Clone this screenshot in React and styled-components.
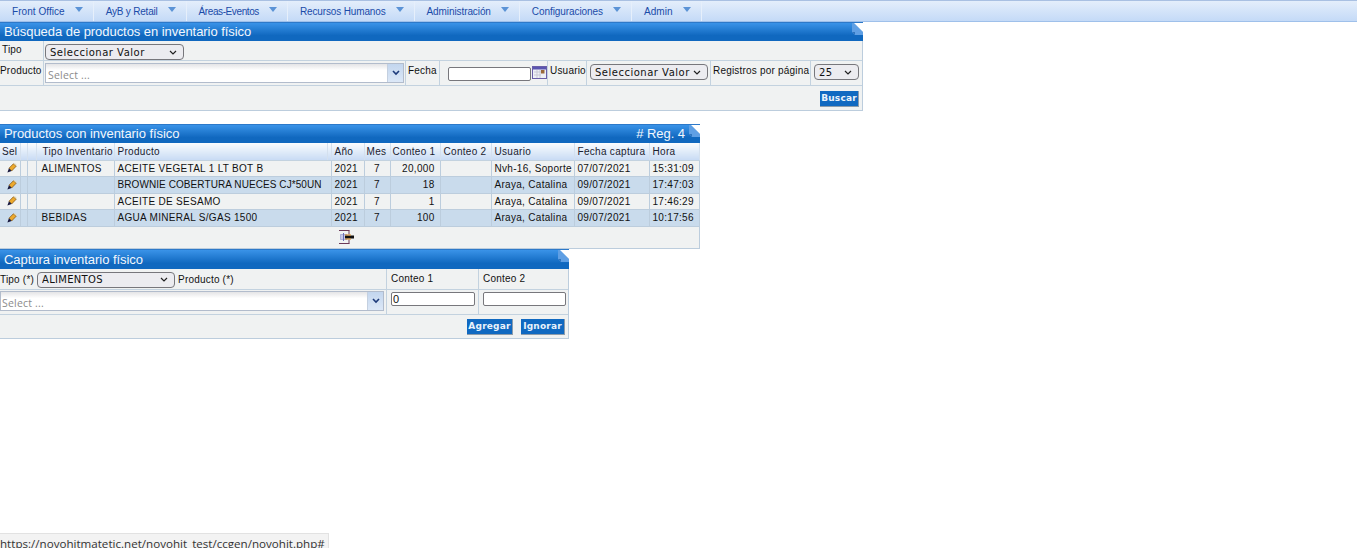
import React from 'react'
import styled, { createGlobalStyle } from 'styled-components'

const selectArrow = "data:image/svg+xml,%3Csvg xmlns='http://www.w3.org/2000/svg' width='8' height='5'%3E%3Cpath d='M1 1l3 3 3-3' fill='none' stroke='%23222' stroke-width='1.2'/%3E%3C/svg%3E";

const GlobalStyle = createGlobalStyle`
    html, body {
        margin: 0;
        padding: 0;
        background: #fff;
        font-family: 'Liberation Sans', Arial, sans-serif;
        font-size: 10px;
        color: #111;
    }
`;

const MenuBar = styled.div`
    display: flex;
    height: 22px;
    box-sizing: border-box;
    border-top: 1px solid #a9c0e2;
    border-bottom: 1px solid #9fc0ea;
    background: linear-gradient(#e4eefb, #c4daf7);
`;

const MenuItem = styled.div`
    display: flex;
    align-items: center;
    height: 20px;
    padding: 0 10px 0 12px;
    gap: 10px;
    border-right: 1px solid #e6effb;
    color: #1a4ba8;
    font-size: 10px;
    letter-spacing: ${props => props.$spacing}px;
    box-sizing: border-box;
`;

const MenuArrow = styled.span`
    width: 0;
    height: 0;
    margin-top: -4px;
    border-left: 4px solid transparent;
    border-right: 4px solid transparent;
    border-top: 5px solid #5b93d6;
`;

const Panel = styled.section`
    width: ${props => props.$width}px;
    margin-top: ${props => props.$top || 0}px;
    box-sizing: border-box;
    background: #f0f2f2;
    border-right: 1px solid #bccddd;
    border-bottom: 1px solid #bccddd;
`;

const PanelTitle = styled.div`
    position: relative;
    display: flex;
    justify-content: space-between;
    align-items: center;
    box-sizing: border-box;
    height: ${props => props.$height || 19}px;
    margin-right: -1px;
    padding: ${props => props.$height ? '1px 15px 0 4px' : '0 15px 1px 4px'};
    border-top: 1px solid #2d79c9;
    background: linear-gradient(#3a93e8, #1068bf 70%);
    color: #f2f7fd;
    font-size: 13px;
    letter-spacing: -0.05px;
`;

const Fold = styled.svg`
    position: absolute;
    top: 0;
    right: 0;
`;

const Row = styled.div`
    display: flex;
    height: ${props => props.$height}px;
    box-sizing: border-box;
    border-bottom: ${props => props.$last ? 'none' : '1px solid #c3d2df'};
`;

const Cell = styled.div`
    display: flex;
    align-items: ${props => props.$align || 'center'};
    justify-content: ${props => props.$justify || 'flex-start'};
    flex: ${props => props.$width ? `0 0 ${props.$width}px` : '1'};
    gap: ${props => props.$gap || 0}px;
    box-sizing: border-box;
    padding: ${props => props.$padding || '0'};
    border-right: ${props => props.$last ? 'none' : '1px solid #c3d2df'};
`;

const Label = styled.span`
    font-size: 10px;
    letter-spacing: 0.2px;
    white-space: nowrap;
`;

const Select = styled.select`
    appearance: none;
    width: ${props => props.$width}px;
    height: 16px;
    box-sizing: border-box;
    padding: 0 0 0 4px;
    font-family: 'DejaVu Sans', Verdana, sans-serif;
    font-size: 10px;
    letter-spacing: ${props => props.$spacing ?? 0.5}px;
    color: #111;
    background: #ececf0 url("${selectArrow}") no-repeat right 6px center;
    border: 1px solid #77777c;
    border-radius: 4px;
`;

const Combo = styled.div`
    display: flex;
    width: ${props => props.$width}px;
    height: ${props => props.$height}px;
    box-sizing: border-box;
    border: 1px solid #b2bccc;
    background: linear-gradient(#e4e4e6, #fff 35%);
`;

const ComboText = styled.span`
    flex: 1;
    align-self: center;
    padding-left: ${props => props.$pad || 2}px;
    margin-top: 3px;
    color: #8b8b8b;
    font-family: 'Open Sans', sans-serif;
    font-size: 10.5px;
    letter-spacing: 0.2px;
`;

const ComboButton = styled.span`
    display: flex;
    align-items: center;
    justify-content: center;
    width: 15px;
    background: linear-gradient(#c3d6ee, #dce8f7);
    border-left: 1px solid #c4d0e0;
`;

const TextInput = styled.input`
    width: ${props => props.$width}px;
    height: 14px;
    box-sizing: border-box;
    padding: 0 1px;
    font-family: 'Liberation Sans', Arial, sans-serif;
    font-size: 11px;
    color: #111;
    background: #fff;
    border: 1px solid #77777c;
    border-radius: 2px;
    outline: none;
`;

const Button = styled.button`
    height: 16px;
    padding: 0;
    width: ${props => props.$width}px;
    font-family: 'DejaVu Sans', Verdana, sans-serif;
    font-size: 9px;
    font-weight: bold;
    letter-spacing: 0.2px;
    color: #e9f2fb;
    background: #1069c1;
    border: none;
    border-right: 1px solid #8c9cab;
    border-bottom: 1px solid #8c9cab;
`;

const Table = styled.table`
    width: 699px;
    table-layout: fixed;
    border-collapse: collapse;
    font-size: 10px;
    letter-spacing: 0.3px;
`;

const Th = styled.th`
    height: 17px;
    padding: 0 0 0 ${props => props.$pad ?? 3}px;
    box-sizing: border-box;
    font-weight: normal;
    text-align: left;
    white-space: nowrap;
    overflow: hidden;
    color: #1a2230;
    background: linear-gradient(#fafcfe, #c8dbf4);
    border-right: 1px solid #d4e0ee;
    border-bottom: 1px solid #c3d2df;
`;

const Td = styled.td`
    height: 16.5px;
    padding: ${props => props.$right ? '0 5px 0 0' : '0 0 0 3px'};
    box-sizing: border-box;
    text-align: ${props => props.$right ? 'right' : 'left'};
    white-space: nowrap;
    overflow: hidden;
    background: ${props => props.$zebra ? '#c9dbec' : '#f0f2f2'};
    border-right: 1px solid #bccddd;
    border-bottom: 1px solid #bccddd;
`;

const PencilCell = styled(Td)`
    padding: 0 0 0 7px;
`;

const NumberCell = styled(Td)`
    padding: 0;
    text-align: center;
`;

const TipoCell = styled(Td)`
    padding-left: 5px;
`;

const ProductCell = styled(Td)`
    letter-spacing: ${props => props.$spacing ?? 0.3}px;
`;

const TableFoot = styled.div`
    display: flex;
    justify-content: center;
    align-items: center;
    height: 21px;
    padding-right: 6px;
`;

const StatusBar = styled.div`
    position: fixed;
    left: 0;
    bottom: 0;
    width: 329px;
    height: 15px;
    box-sizing: border-box;
    overflow: hidden;
    background: #f3f3f3;
    border-top: 1px solid #e2e2e2;
    border-right: 1px solid #e2e2e2;
    color: #333;
    font-family: 'Open Sans', sans-serif;
    font-size: 11.6px;
    line-height: 19px;
    white-space: nowrap;
`;

const menus = [
    { name: 'Front Office', spacing: 0.05 },
    { name: 'AyB y Retail', spacing: -0.2 },
    { name: 'Áreas-Eventos', spacing: -0.4 },
    { name: 'Recursos Humanos', spacing: -0.14 },
    { name: 'Administración', spacing: -0.09 },
    { name: 'Configuraciones', spacing: -0.08 },
    { name: 'Admin', spacing: 0.05 },
];

const colWidths = [20, 7, 9, 78, 213, 4, 33, 26, 50, 51, 83, 75, 50];

const products = [
    { tipo: 'ALIMENTOS', producto: 'ACEITE VEGETAL 1 LT BOT B', conteo: '20,000', usuario: 'Nvh-16, Soporte', fecha: '07/07/2021', hora: '15:31:09' },
    { tipo: '', producto: 'BROWNIE COBERTURA NUECES CJ*50UN', spacing: 0.08, conteo: '18', usuario: 'Araya, Catalina', fecha: '09/07/2021', hora: '17:47:03' },
    { tipo: '', producto: 'ACEITE DE SESAMO', conteo: '1', usuario: 'Araya, Catalina', fecha: '09/07/2021', hora: '17:46:29' },
    { tipo: 'BEBIDAS', producto: 'AGUA MINERAL S/GAS 1500', conteo: '100', usuario: 'Araya, Catalina', fecha: '09/07/2021', hora: '10:17:56' },
];

const FoldIcon = () => (
    <Fold width="11" height="12" viewBox="0 0 11 12">
        <path d="M0 0H2L11 9V12H3L0 9Z" fill="#5f9fe4" />
        <path d="M0 9H3V12Z" fill="#2f74bd" />
        <path d="M2 0H11V9Z" fill="#fff" />
    </Fold>
);

const Chevron = () => (
    <svg width="8" height="6" viewBox="0 0 8 6">
        <path d="M1 1L4 4L7 1" fill="none" stroke="#1d3a7a" strokeWidth="1.6" />
    </svg>
);

const PencilIcon = () => (
    <svg width="10" height="10" viewBox="0 0 10 10" style={{ display: 'block' }}>
        <path d="M2 5.2L6.4 0.8L9.2 3.2L4.6 8Z" fill="#eda92c" stroke="#7a4e10" strokeWidth="0.7" />
        <path d="M6.8 0.7L8 0.2L9.8 1.9L9.2 3Z" fill="#e6d7ae" />
        <path d="M2 5.2L4.6 8L0.4 9.6Z" fill="#16163c" />
    </svg>
);

const CalendarIcon = () => (
    <svg width="15" height="13" viewBox="0 0 15 13" style={{ marginTop: -4 }}>
        <rect x="0.5" y="0.5" width="14" height="12" fill="#eef0f6" stroke="#6a5fa8" />
        <rect x="1" y="1" width="13" height="2.5" fill="#5a55b0" />
        <path d="M2 6H9M2 9H9M5 4V12M8 4V12" stroke="#c9c9d4" />
        <rect x="9" y="4" width="3.5" height="3.5" fill="#9a6a3a" />
    </svg>
);

const ExportIcon = () => (
    <svg width="15" height="16" viewBox="0 0 15 16">
        <path d="M0 1.5H10.5M0 14.5H10.5M10 1.5V5.5M10 10.5V14.5" fill="none" stroke="#6c3a58" />
        <path d="M1.5 5.5H8V10.5H1.5Z" fill="#c7c9e8" stroke="#8e92c8" strokeWidth="0.6" />
        <path d="M4.5 4V12" stroke="#6a6fb8" />
        <rect x="6" y="6.5" width="9" height="3" fill="#111" />
        <rect x="6" y="5.5" width="6" height="1" fill="#d98a1c" />
        <rect x="6" y="9.5" width="6" height="1" fill="#d98a1c" />
    </svg>
);

const Search = () => (
    <Panel $width={863}>
        <PanelTitle>Búsqueda de productos en inventario físico<FoldIcon /></PanelTitle>
        <Row $height={20}>
            <Cell $width={44} $align="flex-start" $padding="3px 0 0 2px"><Label>Tipo</Label></Cell>
            <Cell $last $padding="3px 0 0 1px">
                <Select $width={139}><option>Seleccionar Valor</option></Select>
            </Cell>
        </Row>
        <Row $height={25}>
            <Cell $width={44} $align="flex-start" $padding="4px 0 0 0"><Label>Producto</Label></Cell>
            <Cell $width={362} $padding="0 0 0 1px">
                <Combo $width={359} $height={20}>
                    <ComboText>Select ...</ComboText>
                    <ComboButton><Chevron /></ComboButton>
                </Combo>
            </Cell>
            <Cell $width={34} $align="flex-start" $padding="4px 0 0 2px"><Label>Fecha</Label></Cell>
            <Cell $width={108} $padding="2px 0 0 8px" $gap={1}>
                <TextInput $width={83} readOnly />
                <CalendarIcon />
            </Cell>
            <Cell $width={39} $align="flex-start" $padding="4px 0 0 2px"><Label>Usuario</Label></Cell>
            <Cell $width={124} $padding="0 0 2px 3px">
                <Select $width={118}><option>Seleccionar Valor</option></Select>
            </Cell>
            <Cell $width={100} $align="flex-start" $padding="4px 0 0 2px"><Label>Registros por página</Label></Cell>
            <Cell $last $padding="0 0 2px 3px">
                <Select $width={45}><option>25</option></Select>
            </Cell>
        </Row>
        <Row $height={24} $last>
            <Cell $last $justify="flex-end" $padding="1px 3px 0 0">
                <Button $width={39}>Buscar</Button>
            </Cell>
        </Row>
    </Panel>
);

const ProductsTable = () => (
    <Panel $width={700} $top={13}>
        <PanelTitle>
            Productos con inventario físico
            <span># Reg.&nbsp;4</span>
            <FoldIcon />
        </PanelTitle>
        <Table>
            <colgroup>
                {colWidths.map((w, i) => <col key={i} style={{ width: w }} />)}
            </colgroup>
            <thead>
                <tr>
                    <Th $pad={2}>Sel</Th>
                    <Th />
                    <Th />
                    <Th $pad={6}>Tipo Inventario</Th>
                    <Th>Producto</Th>
                    <Th $pad={0} />
                    <Th>Año</Th>
                    <Th $pad={2}>Mes</Th>
                    <Th $pad={2}>Conteo 1</Th>
                    <Th>Conteo 2</Th>
                    <Th>Usuario</Th>
                    <Th>Fecha captura</Th>
                    <Th>Hora</Th>
                </tr>
            </thead>
            <tbody>
                {products.map((p, i) => (
                    <tr key={p.producto}>
                        <PencilCell $zebra={i % 2 === 1}><PencilIcon /></PencilCell>
                        <Td $zebra={i % 2 === 1} />
                        <Td $zebra={i % 2 === 1} />
                        <TipoCell $zebra={i % 2 === 1}>{p.tipo}</TipoCell>
                        <ProductCell $zebra={i % 2 === 1} $spacing={p.spacing} colSpan={2}>{p.producto}</ProductCell>
                        <Td $zebra={i % 2 === 1}>2021</Td>
                        <NumberCell $zebra={i % 2 === 1}>7</NumberCell>
                        <Td $zebra={i % 2 === 1} $right>{p.conteo}</Td>
                        <Td $zebra={i % 2 === 1} />
                        <Td $zebra={i % 2 === 1}>{p.usuario}</Td>
                        <Td $zebra={i % 2 === 1}>{p.fecha}</Td>
                        <Td $zebra={i % 2 === 1}>{p.hora}</Td>
                    </tr>
                ))}
            </tbody>
        </Table>
        <TableFoot><ExportIcon /></TableFoot>
    </Panel>
);

const Capture = () => (
    <Panel $width={569}>
        <PanelTitle $height={20}>Captura inventario físico<FoldIcon /></PanelTitle>
        <Row $height={21}>
            <Cell $width={387} $gap={3} $padding="2px 0 0 0">
                <Label>Tipo (*)</Label>
                <Select $width={138} $spacing={0.3}><option>ALIMENTOS</option></Select>
                <Label>Producto (*)</Label>
            </Cell>
            <Cell $width={92} $padding="0 0 1px 4px"><Label>Conteo 1</Label></Cell>
            <Cell $last $padding="0 0 1px 4px"><Label>Conteo 2</Label></Cell>
        </Row>
        <Row $height={25}>
            <Cell $width={387} $padding="0 0 1px 0">
                <Combo $width={384} $height={20}>
                    <ComboText $pad={1}>Select ...</ComboText>
                    <ComboButton><Chevron /></ComboButton>
                </Combo>
            </Cell>
            <Cell $width={92} $align="flex-start" $padding="2px 0 0 4px">
                <TextInput $width={84} defaultValue="0" />
            </Cell>
            <Cell $last $align="flex-start" $padding="2px 0 0 4px">
                <TextInput $width={83} />
            </Cell>
        </Row>
        <Row $height={23} $last>
            <Cell $last $justify="flex-end" $gap={8} $padding="1px 3px 0 0">
                <Button $width={46}>Agregar</Button>
                <Button $width={44}>Ignorar</Button>
            </Cell>
        </Row>
    </Panel>
);

export default function App() {
    return (
        <>
            <GlobalStyle />
            <MenuBar>
                {menus.map(m => (
                    <MenuItem key={m.name} $spacing={m.spacing}>{m.name}<MenuArrow /></MenuItem>
                ))}
            </MenuBar>
            <Search />
            <ProductsTable />
            <Capture />
            <StatusBar>https://novohitmatetic.net/novohit_test/ccgen/novohit.php#</StatusBar>
        </>
    )
}
